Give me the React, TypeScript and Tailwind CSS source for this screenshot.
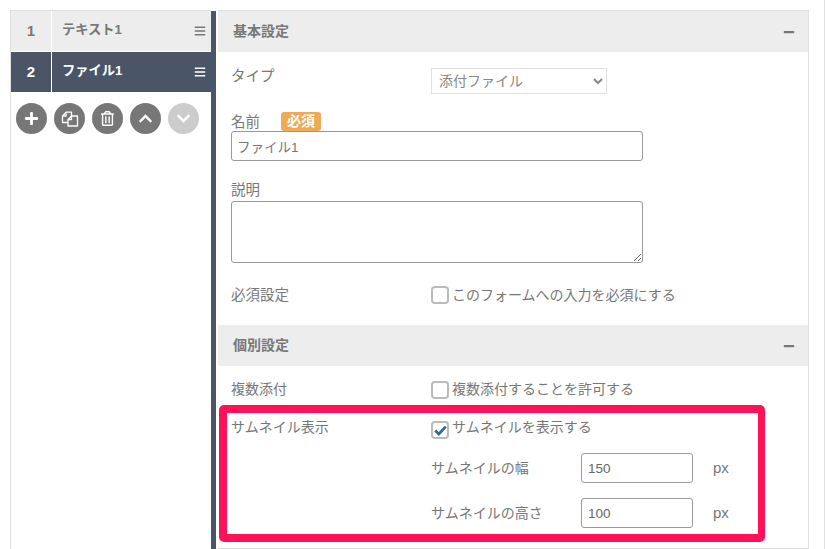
import { FaBars, FaChevronDown, FaChevronUp, FaMinus, FaPlus, FaRegTrashAlt } from 'react-icons/fa';

const font = 'font-["Liberation_Sans","Noto_Sans_CJK_JP",sans-serif]';

function CopyIcon() {
	return (
		<svg width="18" height="18" viewBox="0 0 18 18" fill="none" stroke="#fff" strokeWidth="1.3" strokeLinejoin="round">
			<path d="M7 12.5H1.5V6L5 2.2H10.5V6" />
			<path d="M5 2.2V6H1.5" />
			<path d="M7 16V9.5L10.5 6H16.5V16Z" fill="#777" />
			<path d="M10.5 6V9.5H7" />
		</svg>
	);
}

function Checkbox({ checked }: { checked?: boolean }) {
	return (
		<span className="flex h-[18px] w-[18px] shrink-0 items-center justify-center rounded-[4px] border-2 border-[#bbbbbb] bg-white">
			{checked && (
				<svg width="13" height="11" viewBox="0 0 13 11" fill="none" stroke="#2a6aa5" strokeWidth="2.8">
					<path d="M1.2 5.6L4.8 9L11.8 1.6" />
				</svg>
			)}
		</span>
	);
}

function SideItem({ no, label, active }: { no: number; label: string; active?: boolean }) {
	return (
		<div className={`flex h-10 items-center ${active ? 'bg-[#4b5568] text-white' : 'bg-[#ededed] text-[#777777]'}`}>
			<div className="flex h-full w-[41px] items-center justify-center border-r border-white text-[15px] font-bold">{no}</div>
			<div className="flex-1 pb-[2px] pl-[10px] text-[13.25px] font-bold">{label}</div>
			<FaBars className="mr-[5px] text-[12px]" />
		</div>
	);
}

function CircleButton({ children, off }: { children: React.ReactNode; off?: boolean }) {
	return (
		<button type="button" className={`flex h-[31px] w-[31px] items-center justify-center rounded-full text-white ${off ? 'bg-[#cccccc]' : 'bg-[#777777]'}`}>
			{children}
		</button>
	);
}

function SectionHead({ title }: { title: string }) {
	return (
		<div className="flex h-[41px] items-center justify-between bg-[#ededed] pr-[13px] pl-[15px] text-[14px] font-bold text-[#777777]">
			<span>{title}</span>
			<FaMinus className="text-[12px]" />
		</div>
	);
}

function CheckRow({ label, text, checked, big, lift }: { label: string; text: string; checked?: boolean; big?: boolean; lift?: string }) {
	return (
		<div className="flex h-[18px] items-center">
			<div className={`w-[200px] leading-[18px] ${big ? 'text-[14.5px]' : 'text-[14px]'} ${lift ?? ''}`}>{label}</div>
			<Checkbox checked={checked} />
			<span className={`ml-[3px] text-[14px] leading-[18px] ${lift ?? ''}`}>{text}</span>
		</div>
	);
}

function SizeRow({ label, value }: { label: string; value: string }) {
	return (
		<div className="flex h-[30px] items-center pl-[200px]">
			<div className="w-[150px] text-[14px]">{label}</div>
			<input defaultValue={value} className="h-[30px] w-[112px] rounded-[3px] border border-[#999999] px-[6px] text-[13.5px] text-[#666666] outline-none" />
			<span className="ml-5 text-[15px]">px</span>
		</div>
	);
}

export default function App() {
	return (
		<div className={`${font} flex h-[549px] w-[825px] overflow-hidden border-r border-[#e0e0e0] bg-white pt-[10px] pl-[10px] text-[#777777]`}>
			<div className="flex w-[201px] shrink-0 flex-col border-t border-l border-[#e0e0e0]">
				<SideItem no={1} label="テキスト1" />
				<div className="h-px" />
				<SideItem no={2} label="ファイル1" active />
				<div className="flex gap-[7px] px-[5px] pt-[11px]">
					<CircleButton><FaPlus className="text-[15px]" /></CircleButton>
					<CircleButton><CopyIcon /></CircleButton>
					<CircleButton><FaRegTrashAlt className="text-[15px]" /></CircleButton>
					<CircleButton><FaChevronUp className="text-[15px]" /></CircleButton>
					<CircleButton off><FaChevronDown className="text-[15px]" /></CircleButton>
				</div>
			</div>
			<div className="mt-px h-full w-[5px] shrink-0 bg-[#4b5568]" />
			<div className="ml-[2px] h-[539px] w-[591px] shrink-0 border-t border-r border-b border-[#e0e0e0]">
				<SectionHead title="基本設定" />
				<div className="px-[13px]">
					<div className="mt-[16px] flex h-[26px] items-start">
						<div className="w-[200px] text-[14.5px] leading-[17px]">タイプ</div>
						<select defaultValue="file" className="h-[26px] w-[176px] border border-[#e0e0e0] bg-white pl-[3px] text-[14px] text-[#888888] outline-none">
							<option value="file">添付ファイル</option>
						</select>
					</div>
					<div className="mt-[18px] flex h-[19px] items-center">
						<span className="w-[50px] pt-[2px] text-[14.5px]">名前</span>
						<span className="flex h-[19px] w-10 items-center justify-center rounded-[3px] bg-[#eeaa55] text-[14px] font-bold text-white">必須</span>
					</div>
					<input defaultValue="ファイル1" className="block h-[30px] w-[412px] rounded-[3px] border border-[#999999] px-[5px] text-[13.5px] text-[#777777] outline-none" />
					<div className="mt-[19px] text-[14.5px] leading-5">説明</div>
					<textarea className="mt-[1px] block h-[62px] w-[412px] rounded-[3px] border border-[#999999] outline-none" />
					<div className="mt-[23px]"><CheckRow big label="必須設定" text="このフォームへの入力を必須にする" /></div>
				</div>
				<div className="mt-[21px]"><SectionHead title="個別設定" /></div>
				<div className="px-[13px] pt-[15px]"><CheckRow label="複数添付" lift="pb-[2px]" text="複数添付することを許可する" /></div>
				<div className="mt-[6px] ml-px h-[137px] w-[546px] rounded-[5px] border-8 border-r-[7px] border-[#ff1158] pt-[8px] pl-[4px]">
					<CheckRow label="サムネイル表示" lift="pb-[6px]" text="サムネイルを表示する" checked />
					<div className="mt-[14px] flex flex-col gap-[15px]">
						<SizeRow label="サムネイルの幅" value="150" />
						<SizeRow label="サムネイルの高さ" value="100" />
					</div>
				</div>
			</div>
		</div>
	);
}
